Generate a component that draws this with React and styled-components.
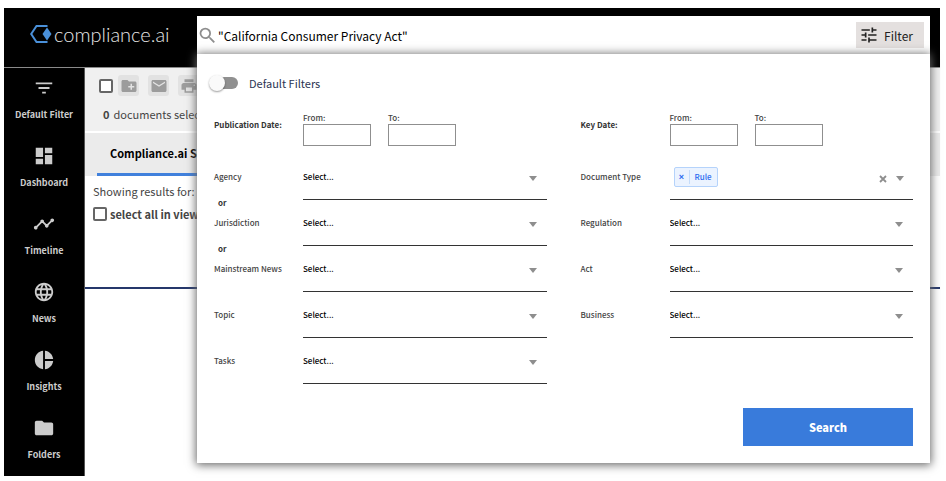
import React, { useState } from 'react'
import styled, { createGlobalStyle } from 'styled-components'
import {
  MdCreateNewFolder,
  MdDashboard,
  MdEmail,
  MdFilterList,
  MdFolder,
  MdLanguage,
  MdPieChart,
  MdPrint,
  MdSearch,
  MdTimeline,
  MdTune
} from 'react-icons/md'

const GlobalStyle = createGlobalStyle`
  * {
    box-sizing: border-box;
  }

  body {
    margin: 0;
    background: white;
    color: #444444;
    font-family: "Noto Sans CJK SC", "Noto Sans", sans-serif;
    font-size: 11px;
    line-height: 16px;
  }

  button, input, select {
    font-family: inherit;
    margin: 0;
  }

  svg {
    display: block;
    flex-shrink: 0;
  }
`

const Shell = styled.div`
  padding: 8px 6px 5px 4px;
`

const Header = styled.header`
  display: flex;
  align-items: flex-start;
  height: 60px;
  padding: 8px 10px 0 0;
  background: black;
  border-bottom: 1px solid #8a8a8a;
`

const Logo = styled.a`
  display: flex;
  align-items: center;
  gap: 2px;
  width: 193px;
  height: 36px;
  padding-left: 26px;
  color: #e6e6e6;
  font-family: Lato, sans-serif;
  font-size: 20px;
  font-weight: 300;
  text-decoration: none;
`

const SearchForm = styled.form`
  position: relative;
  flex: 1;
  min-width: 0;
`

const SearchBar = styled.div`
  display: flex;
  align-items: center;
  height: 38px;
  padding: 0 6px 0 0;
  background: white;
  color: #8e8e8e;
`

const SearchInput = styled.input`
  flex: 1;
  min-width: 0;
  padding: 0;
  border: none;
  outline: none;
  background: none;
  color: #000000;
  font-size: 12px;
`

const FilterButton = styled.button`
  display: flex;
  align-items: center;
  gap: 5px;
  height: 26px;
  padding: 0 11px 0 3px;
  border: none;
  background: #e4e0df;
  color: #222222;
  font-size: 12px;
`

const Panel = styled.div`
  position: absolute;
  top: 100%;
  left: 0;
  right: 0;
  padding: 21px 17px 17px;
  background: white;
  box-shadow: 0 1px 9px 1px #666666;
`

const ToggleLabel = styled.label`
  display: flex;
  align-items: center;
  gap: 11px;
  height: 16px;
  margin-bottom: 21px;
  color: #2b3553;
`

const Toggle = styled.input`
  appearance: none;
  display: flex;
  align-items: center;
  width: 24px;
  height: 12px;
  border-radius: 6px;
  background: #909090;

  &::before {
    content: "";
    flex-shrink: 0;
    width: 16px;
    height: 16px;
    margin-left: -5px;
    border-radius: 50%;
    background: #fafafa;
    box-shadow: 0 1px 2px rgba(0, 0, 0, .4);
  }

  &:checked::before {
    margin-left: 13px;
  }
`

const Columns = styled.div`
  display: grid;
  grid-template-columns: 1fr 1fr;
  column-gap: 34px;
  font-size: 8px;
  font-weight: 500;
`

const DateRow = styled.div`
  display: grid;
  grid-template-columns: 89px 1fr;
  margin-bottom: 18px;
`

const DateTitle = styled.span`
  padding-top: 6px;
  color: #333333;
  font-weight: 700;
  line-height: 14px;
`

const Dates = styled.div`
  display: flex;
  gap: 17px;
`

const DateField = styled.label`
  display: flex;
  flex-direction: column;
  width: 68px;
  line-height: 12px;
`

const DateInput = styled.input`
  width: 100%;
  height: 22px;
  padding: 0 4px;
  border: 1px solid #8f8f8f;
  font-size: 8px;
`

const Row = styled.div`
  display: grid;
  grid-template-columns: 89px 1fr;
  height: 46px;
`

const RowText = styled.div`
  display: flex;
  flex-direction: column;
  justify-content: space-between;
  padding-top: 6px;
  line-height: 14px;
`

const Or = styled.strong`
  padding-left: 4px;
  color: #333333;
`

const Field = styled.div`
  display: grid;
  align-items: center;
  height: 36px;
  padding-bottom: 10px;
  border-bottom: 1px solid #333333;

  > * {
    grid-area: 1 / 1;
  }

  > svg {
    justify-self: end;
    margin: 4px 10px 0 0;
    pointer-events: none;
  }
`

const Select = styled.select`
  appearance: none;
  width: 100%;
  height: 25px;
  padding: 0;
  border: none;
  outline: none;
  background: none;
  color: #000000;
  font-size: 8px;
  font-weight: 500;
`

const TagField = styled(Field)`
  display: flex;
`

const Tag = styled.span`
  display: flex;
  align-items: center;
  height: 20px;
  margin: 0 auto 0 4px;
  border: 1px solid #b5d3fb;
  border-radius: 2px;
  background: #ebf3ff;
  color: #2d6cf0;
`

const TagRemove = styled.button`
  width: 15px;
  height: 14px;
  padding: 0;
  border: none;
  border-right: 1px solid #c5dcfa;
  background: none;
  color: inherit;
  font-family: "Liberation Sans", sans-serif;
  font-size: 9px;
  font-weight: 700;
  line-height: 12px;
`

const TagText = styled.span`
  padding: 0 5px;
`

const PlainButton = styled.button`
  margin: 4px 9px 0 0;
  padding: 0;
  border: none;
  background: none;
`

const Actions = styled.div`
  display: flex;
  justify-content: flex-end;
  margin-top: 14px;
`

const SearchButton = styled.button`
  width: 170px;
  height: 38px;
  border: none;
  background: #397bdb;
  color: white;
  font-size: 11px;
  font-weight: 900;
`

const Body = styled.div`
  display: flex;
`

const Sidebar = styled.nav`
  flex-shrink: 0;
  width: 81px;
  background: black;
  border-right: 1px solid #555555;
`

const NavItem = styled.a`
  display: flex;
  flex-direction: column;
  align-items: center;
  gap: 9px;
  height: 68px;
  padding-top: 9px;
  color: #cccccc;
  font-size: 9px;
  font-weight: 700;
  line-height: 14px;
  text-decoration: none;
`

const Main = styled.main`
  flex: 1;
  min-width: 0;
`

const Toolbar = styled.div`
  height: 63px;
  margin-bottom: 2px;
  padding: 7px 14px;
  background: #f0f0f0;
`

const Tools = styled.div`
  display: flex;
  align-items: center;
  gap: 5px;
`

const ToolButtons = styled.div`
  display: flex;
  gap: 9px;
`

const CheckBox = styled.input`
  appearance: none;
  width: 14px;
  height: 14px;
  border: 2px solid #666666;
  border-radius: 2px;
  background: white;
`

const ToolButton = styled.button`
  display: flex;
  align-items: center;
  justify-content: center;
  width: 21px;
  height: 21px;
  padding: 0;
  border: none;
  border-radius: 3px;
  background: #e2e2e2;
  color: #9c9c9c;
`

const Selected = styled.p`
  margin: 10px 0 0 4px;

  strong {
    margin-right: 4px;
  }
`

const Tabs = styled.div`
  display: flex;
  height: 43px;
  padding-left: 12px;
  background: #ebebeb;
`

const Tab = styled.button`
  padding: 0 13px;
  border: none;
  border-bottom: 3px solid #4080dc;
  background: none;
  color: #000000;
  font-size: 11px;
  font-weight: 700;
`

const Results = styled.section`
  height: 113px;
  padding: 7px 8px;
  border-bottom: 2px solid #25376b;
`

const Showing = styled.p`
  margin: 0 0 7px;
`

const SelectAll = styled.label`
  display: flex;
  align-items: center;
  gap: 3px;
  font-weight: 700;
`

const navItems = [
  { label: 'Default Filter', Icon: MdFilterList },
  { label: 'Dashboard', Icon: MdDashboard },
  { label: 'Timeline', Icon: MdTimeline },
  { label: 'News', Icon: MdLanguage },
  { label: 'Insights', Icon: MdPieChart },
  { label: 'Folders', Icon: MdFolder }
]

const tools = [
  { label: 'Add to folder', Icon: MdCreateNewFolder },
  { label: 'Email', Icon: MdEmail },
  { label: 'Print', Icon: MdPrint }
]

const Arrow = () => (
  <svg width="8" height="5" viewBox="0 0 8 5" aria-hidden="true">
    <path d="M0 0h8L4 5z" fill="#8e8e8e" />
  </svg>
)

const Cross = () => (
  <svg width="8" height="8" viewBox="0 0 8 8" aria-hidden="true">
    <path d="M1 1l6 6M7 1L1 7" stroke="#8e8e8e" strokeWidth="1.800" />
  </svg>
)

function DateRange({ title }) {
  return (
    <DateRow role="group" aria-label={title}>
      <DateTitle>{title}</DateTitle>
      <Dates>
        <DateField>From:<DateInput type="text" /></DateField>
        <DateField>To:<DateInput type="text" /></DateField>
      </Dates>
    </DateRow>
  )
}

function SelectRow({ label, or }) {
  const id = label.toLowerCase().replace(' ', '-')

  return (
    <Row>
      <RowText>
        <label htmlFor={id}>{label}</label>
        {or && <Or>or</Or>}
      </RowText>
      <Field>
        <Select id={id}>
          <option>Select...</option>
        </Select>
        <Arrow />
      </Field>
    </Row>
  )
}

function DocumentTypeRow() {
  return (
    <Row role="group" aria-labelledby="document-type">
      <RowText>
        <span id="document-type">Document Type</span>
      </RowText>
      <TagField>
        <Tag>
          <TagRemove type="button" aria-label="Remove Rule">×</TagRemove>
          <TagText>Rule</TagText>
        </Tag>
        <PlainButton type="button" aria-label="Clear"><Cross /></PlainButton>
        <PlainButton type="button" aria-label="Open"><Arrow /></PlainButton>
      </TagField>
    </Row>
  )
}

export default function App() {
  const [query, setQuery] = useState('"California Consumer Privacy Act"')

  return (
    <Shell>
      <GlobalStyle />
      <Header>
        <Logo href="#">
          <svg width="22" height="20" viewBox="0 0 22 20" aria-hidden="true">
            <path d="M17.500 2h-11L1.200 10l5.300 8h11" fill="none" stroke="#4a90d9" strokeWidth="2" />
            <path d="M17 3.500l4.500 6.500-4.500 6.500-4.500-6.500z" fill="#4a90d9" />
          </svg>
          compliance.ai
        </Logo>

        <SearchForm onSubmit={e => e.preventDefault()}>
          <SearchBar>
            <MdSearch size={21} />
            <SearchInput aria-label="Search" value={query} onChange={e => setQuery(e.target.value)} />
            <FilterButton type="button"><MdTune size={20} />Filter</FilterButton>
          </SearchBar>

          <Panel>
            <ToggleLabel><Toggle type="checkbox" />Default Filters</ToggleLabel>
            <Columns>
              <div>
                <DateRange title="Publication Date:" />
                <SelectRow label="Agency" or />
                <SelectRow label="Jurisdiction" or />
                <SelectRow label="Mainstream News" />
                <SelectRow label="Topic" />
                <SelectRow label="Tasks" />
              </div>
              <div>
                <DateRange title="Key Date:" />
                <DocumentTypeRow />
                <SelectRow label="Regulation" />
                <SelectRow label="Act" />
                <SelectRow label="Business" />
              </div>
            </Columns>
            <Actions>
              <SearchButton type="submit">Search</SearchButton>
            </Actions>
          </Panel>
        </SearchForm>
      </Header>

      <Body>
        <Sidebar>
          {navItems.map(({ label, Icon }) => (
            <NavItem href="#" key={label}><Icon size={22} />{label}</NavItem>
          ))}
        </Sidebar>

        <Main>
          <Toolbar>
            <Tools>
              <CheckBox type="checkbox" aria-label="Select documents" />
              <ToolButtons>
                {tools.map(({ label, Icon }) => (
                  <ToolButton type="button" key={label} aria-label={label}><Icon size={18} /></ToolButton>
                ))}
              </ToolButtons>
            </Tools>
            <Selected><strong>0</strong>documents selected</Selected>
          </Toolbar>
          <Tabs>
            <Tab type="button">Compliance.ai Search</Tab>
          </Tabs>
          <Results>
            <Showing>Showing results for:</Showing>
            <SelectAll><CheckBox type="checkbox" />select all in view</SelectAll>
          </Results>
        </Main>
      </Body>
    </Shell>
  )
}
